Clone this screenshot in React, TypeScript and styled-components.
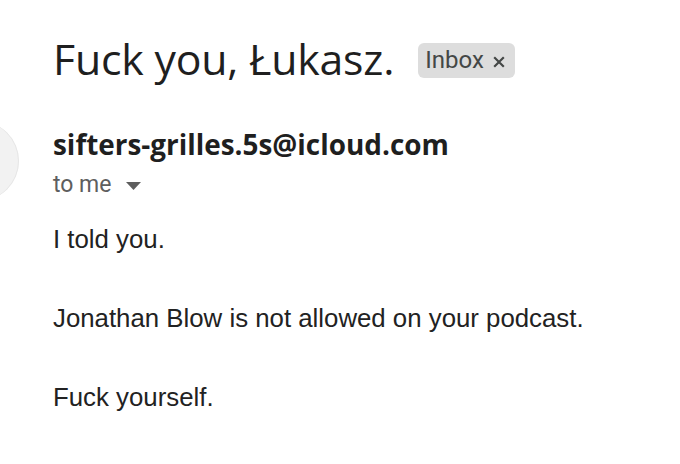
import React from "react";
import styled, { createGlobalStyle } from "styled-components";

const GlobalStyle = createGlobalStyle`
  html, body { margin: 0; padding: 0; background: #ffffff; }
  body { width: 680px; height: 464px; overflow: hidden; }
`;

const Page = styled.div`
  display: flex;
  flex-direction: column;
  padding: 26px 0 0 53px;
  color: #1f1f1f;
`;

const TitleRow = styled.div`
  display: flex;
  align-items: center;
  gap: 24px;
  height: 66px;
`;

const Title = styled.h1`
  margin: 0;
  font-family: "Open Sans", Roboto, sans-serif;
  font-weight: 400;
  font-size: 42.8px;
  line-height: 1;
  color: #1f1f1f;
  letter-spacing: -0.2px;
`;

const Chip = styled.span`
  display: inline-flex;
  align-items: center;
  gap: 9px;
  height: 35px;
  padding: 0 10px 0 7px;
  border-radius: 6px;
  background: #dddddd;
  font-family: Roboto, "Liberation Sans", sans-serif;
  font-size: 24px;
  color: #444746;
  margin-top: 2px;
`;

const ChipClose = styled.svg`
  width: 12px;
  height: 12px;
  margin-top: 3px;
`;

const SenderRow = styled.div`
  display: flex;
  align-items: flex-start;
  margin-top: 35px;
`;

const Avatar = styled.div`
  flex: none;
  width: 80px;
  height: 80px;
  border-radius: 50%;
  background: #f2f2f2;
  box-shadow: inset -1px 0 0 #e6e6e6;
  margin-left: -114px;
  margin-right: 34px;
  margin-top: -6px;
`;

const SenderInfo = styled.div`
  display: flex;
  flex-direction: column;
`;

const SenderEmail = styled.div`
  font-family: "Open Sans", Roboto, sans-serif;
  font-weight: 700;
  font-size: 27.9px;
  line-height: 34px;
  color: #1f1f1f;
`;

const ToMe = styled.div`
  display: flex;
  align-items: center;
  gap: 14px;
  margin-top: 12px;
  font-family: Roboto, "Liberation Sans", sans-serif;
  font-size: 23px;
  line-height: 24px;
  color: #5e5e5e;
`;

const Caret = styled.svg`
  width: 15px;
  height: 8px;
  margin-top: 2px;
`;

const Body = styled.div`
  margin-top: 19px;
  font-family: "Liberation Sans", Arial, sans-serif;
  font-size: 25.8px;
  line-height: 39.5px;
  color: #222222;
`;

const Line = styled.div`
  min-height: 39.5px;
`;

export default function App() {
  return (
    <>
      <GlobalStyle />
      <Page>
        <TitleRow>
          <Title>Fuck you, Łukasz.</Title>
          <Chip>
            Inbox
            <ChipClose viewBox="0 0 10 10">
              <path d="M1 1 L9 9 M9 1 L1 9" stroke="#444746" strokeWidth="1.8" />
            </ChipClose>
          </Chip>
        </TitleRow>
        <SenderRow>
          <Avatar />
          <SenderInfo>
            <SenderEmail>sifters-grilles.5s@icloud.com</SenderEmail>
            <ToMe>
              to me
              <Caret viewBox="0 0 15 8">
                <path d="M0 0 L15 0 L7.5 8 Z" fill="#5e5e5e" />
              </Caret>
            </ToMe>
          </SenderInfo>
        </SenderRow>
        <Body>
          <Line>I told you.</Line>
          <Line />
          <Line>Jonathan Blow is not allowed on your podcast.</Line>
          <Line />
          <Line>Fuck yourself.</Line>
        </Body>
      </Page>
    </>
  );
}
